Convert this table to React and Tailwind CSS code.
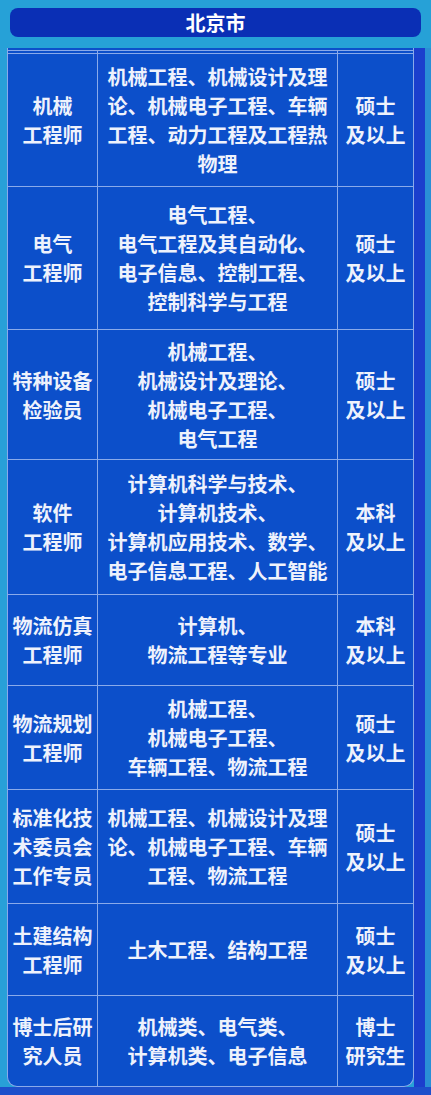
const rows = [
  { h: 133, role: ['机械', '工程师'], major: ['机械工程、机械设计及理', '论、机械电子工程、车辆', '工程、动力工程及工程热', '物理'], edu: ['硕士', '及以上'] },
  { h: 143, role: ['电气', '工程师'], major: ['电气工程、', '电气工程及其自动化、', '电子信息、控制工程、', '控制科学与工程'], edu: ['硕士', '及以上'] },
  { h: 130, role: ['特种设备', '检验员'], major: ['机械工程、', '机械设计及理论、', '机械电子工程、', '电气工程'], edu: ['硕士', '及以上'] },
  { h: 135, role: ['软件', '工程师'], major: ['计算机科学与技术、', '计算机技术、', '计算机应用技术、数学、', '电子信息工程、人工智能'], edu: ['本科', '及以上'] },
  { h: 91, role: ['物流仿真', '工程师'], major: ['计算机、', '物流工程等专业'], edu: ['本科', '及以上'] },
  { h: 104, role: ['物流规划', '工程师'], major: ['机械工程、', '机械电子工程、', '车辆工程、物流工程'], edu: ['硕士', '及以上'] },
  { h: 114, role: ['标准化技', '术委员会', '工作专员'], major: ['机械工程、机械设计及理', '论、机械电子工程、车辆', '工程、物流工程'], edu: ['硕士', '及以上'] },
  { h: 92, role: ['土建结构', '工程师'], major: ['土木工程、结构工程'], edu: ['硕士', '及以上'] },
  { h: 91, role: ['博士后研', '究人员'], major: ['机械类、电气类、', '计算机类、电子信息'], edu: ['博士', '研究生'] },
];

function Lines({ items }) {
  return (
    <div className="flex flex-col items-center">
      {items.map((t, i) => (
        <div key={i} className="whitespace-nowrap">{t}</div>
      ))}
    </div>
  );
}

export default function App() {
  return (
    <div
      className="w-[431px] h-[1095px] bg-[#26a1d7] overflow-hidden text-[#eef2fc] font-bold"
      style={{ fontFamily: '"Noto Sans CJK SC", "Noto Sans", sans-serif' }}
    >
      <div className="mx-[10px] mt-[8px] h-[29px] rounded-[8px] bg-[#0a2fb5] flex items-center justify-center text-[20px] text-white">
        北京市
      </div>
      <div className="mt-[11px] flex">
        <div className="w-[7px] bg-[#28a0d8]" />
        <div className="w-[407px] bg-[#0c4fca] border-x border-b border-[#8aaaea] rounded-b-[10px] text-[20px] leading-[29px]">
          <div className="h-[2px]" />
          <div className="h-[3px] border-t border-[#8aaaea] flex">
            <div className="w-[90px] border-r border-[#8aaaea]" />
            <div className="w-[240px] border-r border-[#8aaaea]" />
          </div>
          {rows.map((r, i) => (
            <div key={i} className="flex border-t border-[#8aaaea]" style={{ height: r.h }}>
              <div className="w-[90px] border-r border-[#8aaaea] flex items-center justify-center">
                <Lines items={r.role} />
              </div>
              <div className="w-[240px] border-r border-[#8aaaea] flex items-center justify-center">
                <Lines items={r.major} />
              </div>
              <div className="flex-1 flex items-center justify-center">
                <Lines items={r.edu} />
              </div>
            </div>
          ))}
        </div>
        <div className="w-[11px] bg-[#1b3fcd]" />
        <div className="w-[6px] bg-[#2a8fd6]" />
      </div>
      <div className="h-[20px] bg-[#1d4fcb]" />
    </div>
  );
}
